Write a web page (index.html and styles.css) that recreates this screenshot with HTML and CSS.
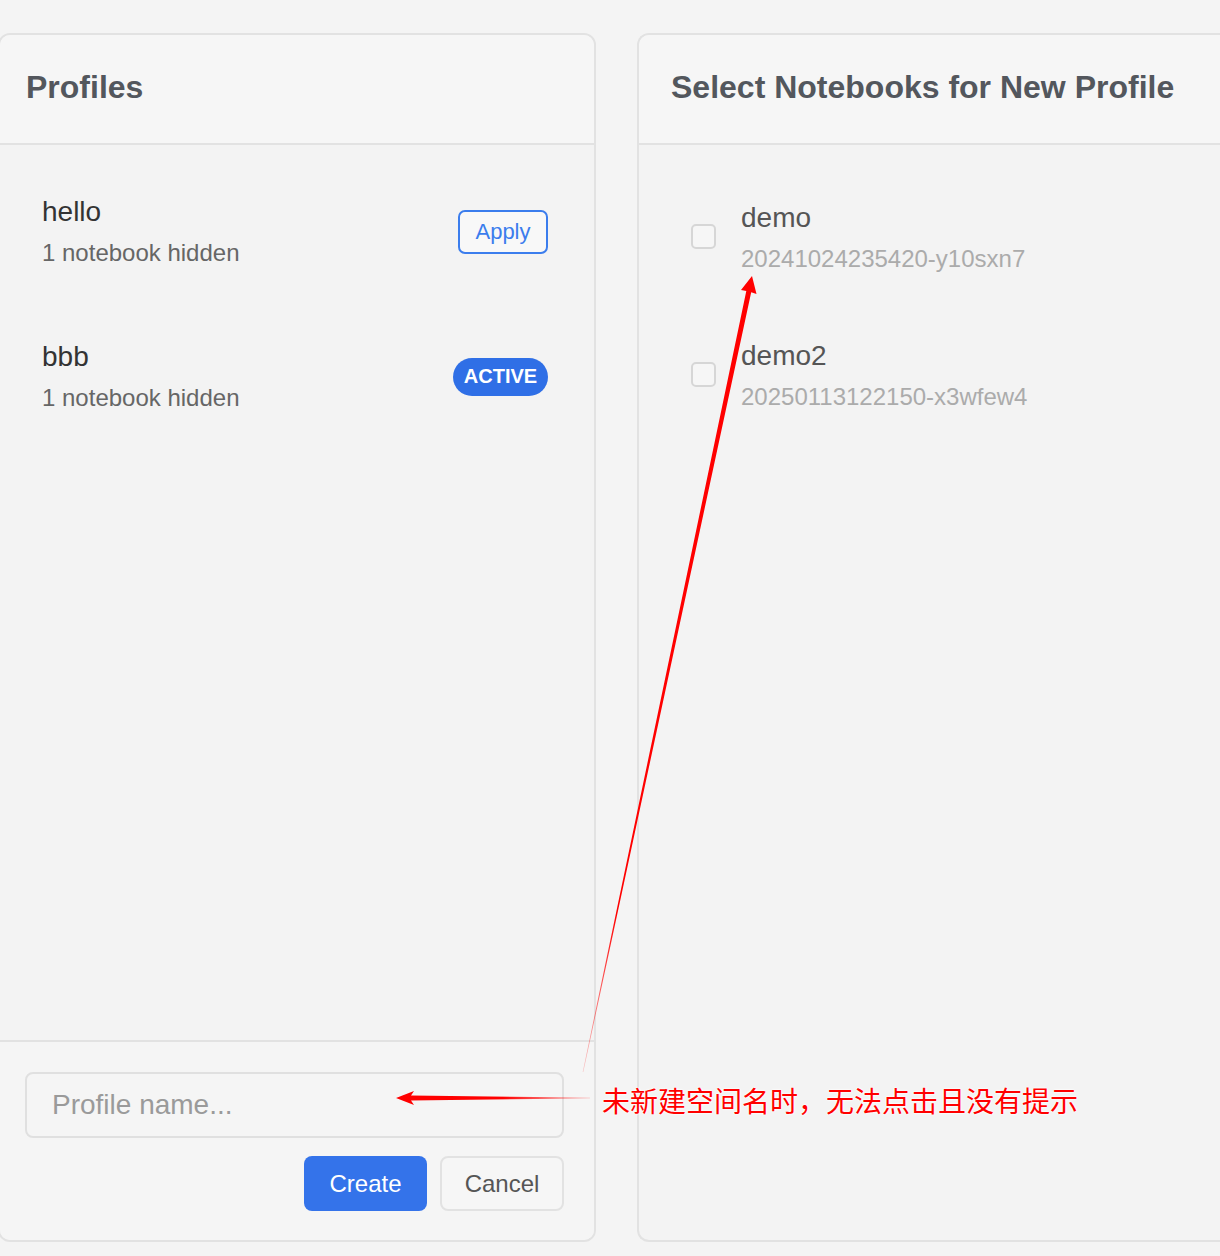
FILE: index.html
```html
<!DOCTYPE html>
<html><head>
<meta charset="utf-8">
<meta name="viewport" content="width=device-width, initial-scale=1.0">
<title>Profiles</title>
<link rel="stylesheet" href="styles.css">
</head>
<body>
<div class="layout">
  <div class="panel panel-left">
    <div class="panel-head"><h2>Profiles</h2></div>
    <div class="profile-list">
      <div class="profile">
        <div class="info">
          <div class="name">hello</div>
          <div class="sub">1 notebook hidden</div>
        </div>
        <button class="apply">Apply</button>
      </div>
      <div class="profile">
        <div class="info">
          <div class="name">bbb</div>
          <div class="sub">1 notebook hidden</div>
        </div>
        <span class="badge">ACTIVE</span>
      </div>
    </div>
    <div class="panel-foot">
      <input class="name-input" type="text" placeholder="Profile name...">
      <div class="actions">
        <button class="create">Create</button>
        <button class="cancel">Cancel</button>
      </div>
    </div>
  </div>

  <div class="panel panel-right">
    <div class="panel-head"><h2>Select Notebooks for New Profile</h2></div>
    <div class="nb-list">
      <label class="nb">
        <span class="check"></span>
        <span class="info">
          <span class="nb-name">demo</span>
          <span class="nb-id">20241024235420-y10sxn7</span>
        </span>
      </label>
      <label class="nb">
        <span class="check"></span>
        <span class="info">
          <span class="nb-name">demo2</span>
          <span class="nb-id">20250113122150-x3wfew4</span>
        </span>
      </label>
    </div>
  </div>
</div>

<!-- annotation layer -->
<svg class="marks" width="1220" height="1256" viewBox="0 0 1220 1256">
  <defs>
    <linearGradient id="fadeA" gradientUnits="userSpaceOnUse" x1="752" y1="276" x2="583" y2="1072">
      <stop offset="0" stop-color="#ff0000"/>
      <stop offset="0.8" stop-color="#ff0000"/>
      <stop offset="1" stop-color="#ff0000" stop-opacity="0.2"/>
    </linearGradient>
    <linearGradient id="fadeB" gradientUnits="userSpaceOnUse" x1="396" y1="0" x2="590" y2="0">
      <stop offset="0" stop-color="#ff0000"/>
      <stop offset="0.55" stop-color="#ff0000"/>
      <stop offset="1" stop-color="#ff0000" stop-opacity="0.15"/>
    </linearGradient>
  </defs>
  <polygon fill="url(#fadeA)" points="752,276 756.5,294 751.2,292.2 583.3,1072 582.7,1072 746.3,291.1 741,290"/>
  <polygon fill="url(#fadeB)" points="396,1098 414,1091 411,1095.6 590,1097.6 590,1098.4 411,1100.4 414,1105"/>
</svg>
<div class="note">未新建空间名时，无法点击且没有提示</div>
</body>
</html>
```
FILE: styles.css
```css
html, body { overflow: hidden; }
body {
  margin: 0;
  background: #f4f4f4;
  font-family: "Liberation Sans", Arial, sans-serif;
  position: relative;
  width: 1220px;
  height: 1256px;
}

.layout {
  display: flex;
  gap: 41px;
  padding-top: 33px;
}

.panel {
  height: 1209px;
  box-sizing: border-box;
  border: 2px solid #e2e2e2;
  border-radius: 12px;
  background: #f3f3f3;
  display: flex;
  flex-direction: column;
  overflow: hidden;
}
.panel-left {
  flex: none;
  width: 598px;
  margin-left: -2px;
}
.panel-right {
  flex: 1;
  border-right: none;
  border-top-right-radius: 0;
  border-bottom-right-radius: 0;
}

.panel-head {
  height: 110px;
  box-sizing: border-box;
  border-bottom: 2px solid #e2e2e2;
  background: #f6f6f6;
  display: flex;
  align-items: center;
  padding: 0 26px 3px;
}
.panel-right .panel-head { padding-left: 32px; }
.panel-head h2 {
  margin: 0;
  font-size: 32px;
  font-weight: bold;
  color: #53575d;
}

/* profiles */
.profile-list {
  flex: 1;
  padding-top: 14px;
}
.profile {
  height: 145px;
  display: flex;
  align-items: center;
  justify-content: space-between;
  padding: 0 46px 0 42px;
}
.info { display: flex; flex-direction: column; gap: 9px; }
.name { font-size: 28px; line-height: 34px; color: #333; }
.sub { font-size: 24px; line-height: 30px; color: #666; }

.apply {
  width: 90px;
  height: 44px;
  box-sizing: border-box;
  border: 2px solid #3b7ded;
  border-radius: 7px;
  background: #f8f8f8;
  color: #3b7ded;
  font-family: inherit;
  font-size: 22px;
  padding: 0;
}
.badge {
  width: 95px;
  height: 38px;
  border-radius: 19px;
  background: #2f6fe6;
  color: #fff;
  font-weight: bold;
  font-size: 20px;
  display: flex;
  align-items: center;
  justify-content: center;
}

.panel-foot {
  border-top: 2px solid #e2e2e2;
  background: #f5f5f5;
  padding: 30px 30px 29px 25px;
  display: flex;
  flex-direction: column;
  gap: 18px;
}
.name-input {
  height: 66px;
  box-sizing: border-box;
  border: 2px solid #e0e0e0;
  border-radius: 8px;
  background: #f5f5f5;
  padding: 0 25px;
  font-family: inherit;
  font-size: 28px;
  outline: none;
}
.name-input::placeholder { color: #9a9a9a; }
.actions {
  display: flex;
  justify-content: flex-end;
  gap: 13px;
}
.actions button {
  height: 55px;
  box-sizing: border-box;
  border-radius: 8px;
  font-family: inherit;
  font-size: 24px;
  padding: 0;
}
.create {
  width: 123px;
  border: none;
  background: #3473ea;
  color: #fff;
}
.cancel {
  width: 124px;
  border: 2px solid #e2e2e2;
  background: #f6f6f6;
  color: #555;
}

/* notebooks */
.nb-list { padding-top: 23px; }
.nb {
  height: 138px;
  display: flex;
  align-items: center;
  gap: 25px;
  padding-left: 52px;
}
.check {
  width: 25px;
  height: 25px;
  box-sizing: border-box;
  border: 2px solid #d6d6d6;
  border-radius: 5px;
  background: #f6f6f6;
  margin-top: -2px;
}
.nb-name { font-size: 28px; line-height: 34px; color: #555; }
.nb-id { font-size: 24px; line-height: 30px; color: #ababab; }

/* annotations */
.marks {
  position: absolute;
  top: 0;
  left: 0;
  pointer-events: none;
}
.note {
  position: absolute;
  left: 602px;
  top: 1081px;
  font-family: "Noto Sans CJK SC", sans-serif;
  font-size: 28px;
  line-height: 38px;
  color: #ff0000;
  white-space: nowrap;
  text-shadow: 0 0 2px #fff, 0 0 2px #fff, 0 0 3px #fff;
}
```
